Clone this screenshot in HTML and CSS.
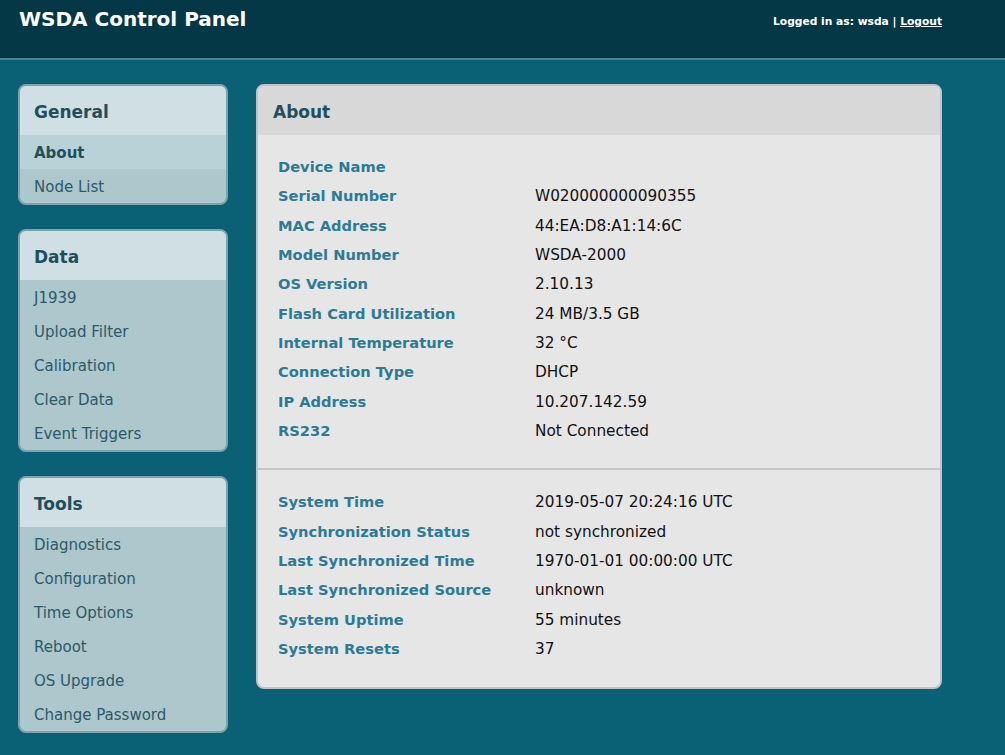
FILE: index.html
```html
<!DOCTYPE html>
<html>
<head>
<meta charset="utf-8">
<title>WSDA Control Panel</title>
<link rel="stylesheet" href="styles.css">
</head>
<body>
<header class="topbar">
  <h1 class="brand">WSDA Control Panel</h1>
  <div class="login">Logged in as: wsda | <a href="#" class="logout">Logout</a></div>
</header>
<div class="layout">
  <nav class="sidebar">
    <div class="navbox">
      <div class="navhead">General</div>
      <a class="navitem active" href="#">About</a>
      <a class="navitem" href="#">Node List</a>
    </div>
    <div class="navbox">
      <div class="navhead">Data</div>
      <a class="navitem" href="#">J1939</a>
      <a class="navitem" href="#">Upload Filter</a>
      <a class="navitem" href="#">Calibration</a>
      <a class="navitem" href="#">Clear Data</a>
      <a class="navitem" href="#">Event Triggers</a>
    </div>
    <div class="navbox">
      <div class="navhead">Tools</div>
      <a class="navitem" href="#">Diagnostics</a>
      <a class="navitem" href="#">Configuration</a>
      <a class="navitem" href="#">Time Options</a>
      <a class="navitem" href="#">Reboot</a>
      <a class="navitem" href="#">OS Upgrade</a>
      <a class="navitem" href="#">Change Password</a>
    </div>
  </nav>
  <main class="panel">
    <div class="panelhead">About</div>
    <div class="section">
      <div class="row"><span class="label">Device Name</span><span class="value"></span></div>
      <div class="row"><span class="label">Serial Number</span><span class="value">W020000000090355</span></div>
      <div class="row"><span class="label">MAC Address</span><span class="value">44:EA:D8:A1:14:6C</span></div>
      <div class="row"><span class="label">Model Number</span><span class="value">WSDA-2000</span></div>
      <div class="row"><span class="label">OS Version</span><span class="value">2.10.13</span></div>
      <div class="row"><span class="label">Flash Card Utilization</span><span class="value">24 MB/3.5 GB</span></div>
      <div class="row"><span class="label">Internal Temperature</span><span class="value">32 °C</span></div>
      <div class="row"><span class="label">Connection Type</span><span class="value">DHCP</span></div>
      <div class="row"><span class="label">IP Address</span><span class="value">10.207.142.59</span></div>
      <div class="row"><span class="label">RS232</span><span class="value">Not Connected</span></div>
    </div>
    <div class="section second">
      <div class="row"><span class="label">System Time</span><span class="value">2019-05-07 20:24:16 UTC</span></div>
      <div class="row"><span class="label">Synchronization Status</span><span class="value">not synchronized</span></div>
      <div class="row"><span class="label">Last Synchronized Time</span><span class="value">1970-01-01 00:00:00 UTC</span></div>
      <div class="row"><span class="label">Last Synchronized Source</span><span class="value">unknown</span></div>
      <div class="row"><span class="label">System Uptime</span><span class="value">55 minutes</span></div>
      <div class="row"><span class="label">System Resets</span><span class="value">37</span></div>
    </div>
  </main>
</div>
</body>
</html>
```
FILE: styles.css
```css
html, body {
  margin: 0;
  padding: 0;
}
body {
  background: #0a6075;
  font-family: "DejaVu Sans", Verdana, sans-serif;
  height: 755px;
  overflow: hidden;
}
.topbar {
  height: 58px;
  background: #043847;
  border-bottom: 2px solid #4e8591;
  display: flex;
  justify-content: space-between;
  align-items: flex-start;
  padding: 0 63px 0 19px;
}
.brand {
  margin: 7px 0 0 0;
  color: #fff;
  font-size: 20px;
  font-weight: bold;
}
.login {
  margin-top: 15px;
  color: #fff;
  font-size: 10.7px;
  font-weight: bold;
}
.logout {
  color: #fff;
}
.layout {
  display: flex;
  align-items: flex-start;
  padding: 24px 18px 0 18px;
  gap: 28px;
}
.sidebar {
  width: 210px;
  display: flex;
  flex-direction: column;
  gap: 24px;
}
.navbox {
  border: 2px solid #7ea2ac;
  border-radius: 8px;
  background: #adc7cd;
  overflow: hidden;
  display: flex;
  flex-direction: column;
}
.navhead {
  background: #cfdfe3;
  color: #1f4f5c;
  font-weight: bold;
  font-size: 17px;
  height: 46px;
  line-height: 46px;
  padding: 3px 0 0 14px;
}
.navitem {
  display: block;
  height: 34px;
  box-sizing: border-box;
  line-height: 32px;
  padding: 2px 0 0 14px;
  font-size: 15px;
  color: #2b5a68;
  text-decoration: none;
}
.navitem.active {
  background: #b8d2d8;
  font-weight: bold;
  color: #1f4f5c;
}
.panel {
  width: 682px;
  border: 2px solid #c2c2c2;
  border-radius: 8px;
  background: #e6e6e6;
  overflow: hidden;
}
.panelhead {
  background: #d8d8d8;
  color: #1f4f5c;
  font-weight: bold;
  font-size: 17px;
  height: 46px;
  line-height: 46px;
  padding: 3px 0 0 15px;
}
.section {
  padding: 17px 20px 23px 20px;
}
.section.second {
  border-top: 2px solid #c6c6c6;
  padding: 17px 20px 23px 20px;
}
.row {
  display: flex;
  align-items: baseline;
  height: 29.35px;
  line-height: 29.35px;
}
.label {
  width: 257px;
  flex: none;
  color: #2b7b94;
  font-weight: bold;
  font-size: 14.65px;
}
.value {
  color: #111;
  font-size: 15.3px;
}
```
